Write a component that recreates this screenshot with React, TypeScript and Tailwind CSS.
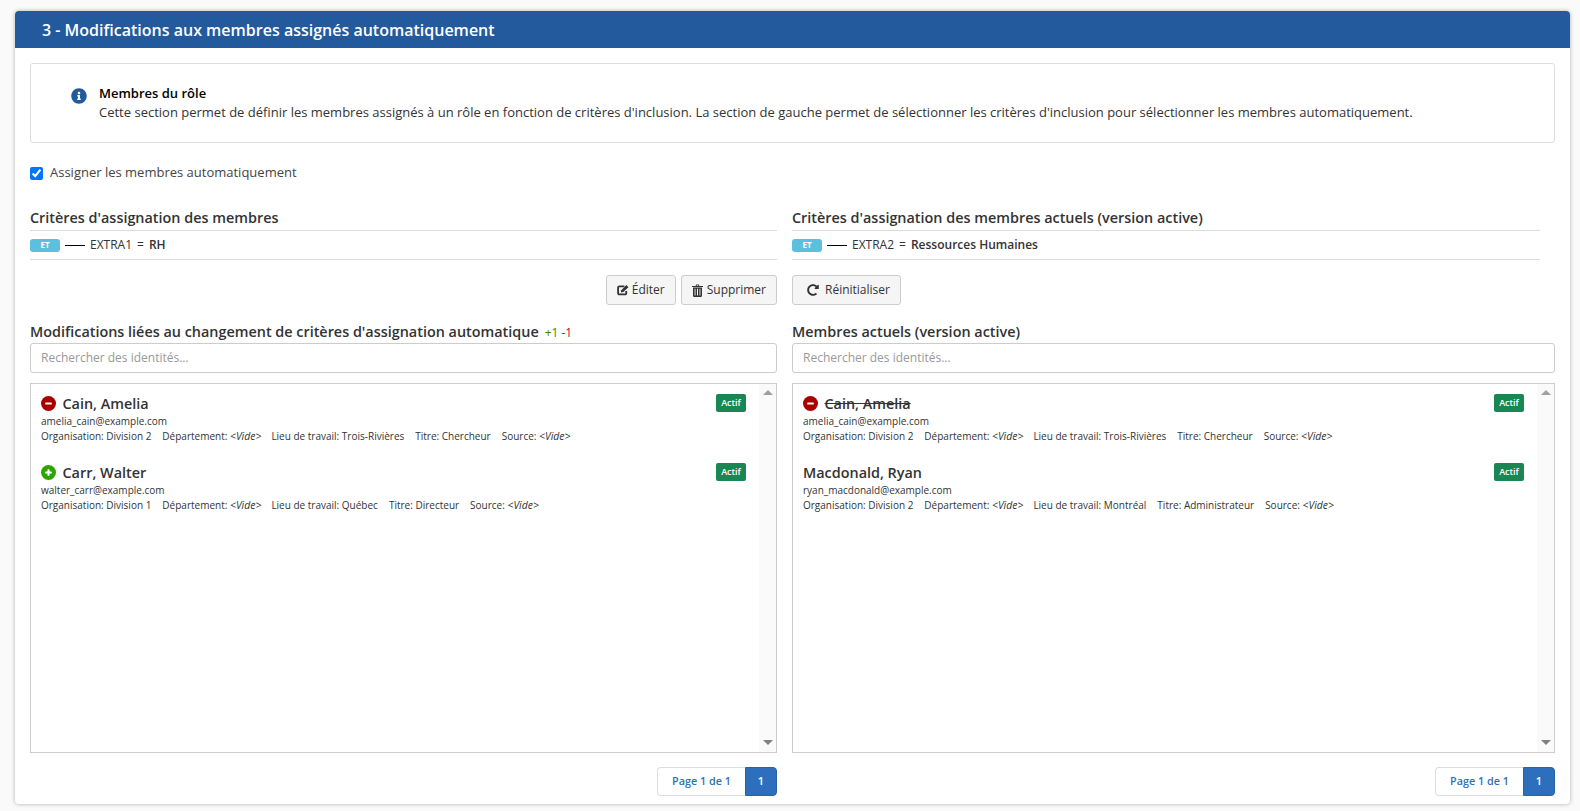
import React from "react";
import { FaInfoCircle, FaRedoAlt } from "react-icons/fa";

interface Membre {
  nom: string;
  email: string;
  organisation: string;
  lieu: string;
  titre: string;
  statut?: "ajout" | "retrait";
  barre?: boolean;
}

const gauche: Membre[] = [
  { nom: "Cain, Amelia", email: "amelia_cain@example.com", organisation: "Division 2", lieu: "Trois-Rivières", titre: "Chercheur", statut: "retrait" },
  { nom: "Carr, Walter", email: "walter_carr@example.com", organisation: "Division 1", lieu: "Québec", titre: "Directeur", statut: "ajout" },
];

const droite: Membre[] = [
  { nom: "Cain, Amelia", email: "amelia_cain@example.com", organisation: "Division 2", lieu: "Trois-Rivières", titre: "Chercheur", statut: "retrait", barre: true },
  { nom: "Macdonald, Ryan", email: "ryan_macdonald@example.com", organisation: "Division 2", lieu: "Montréal", titre: "Administrateur" },
];

const Vide = () => <i className="text-[10.4px]">&lt;Vide&gt;</i>;

const IconeEditer = () => (
  <svg width="12" height="12" viewBox="0 0 13 12" className="mr-[3px]" fill="none">
    <path d="M8 2H2.6A1.3 1.3 0 0 0 1.2 3.3v6.1a1.3 1.3 0 0 0 1.4 1.4h6.1a1.3 1.3 0 0 0 1.3-1.4V7" stroke="#333" strokeWidth="2" />
    <path d="M4.2 8.6 4.6 6.2 10.2 0.7 12.4 2.9 6.8 8.3Z" fill="#333" />
  </svg>
);

const IconeCorbeille = () => (
  <svg width="11" height="13" viewBox="0 0 11 13" className="mr-[4px]" fill="#333">
    <path d="M3.6 1.9 4.2.4h2.6l.6 1.5H11v1H0v-1Zm1-.1h1.8L6.1 1.1H4.9Z" />
    <path d="M1 3.4h9v8.3c0 .7-.4 1.2-1 1.2H2c-.6 0-1-.5-1-1.2Zm1.6 1.3v6.9h.9V4.7Zm2.4 0v6.9h1V4.7Zm2.5 0v6.9h.9V4.7Z" />
  </svg>
);

const Pastille = ({ statut }: { statut: "ajout" | "retrait" }) => (
  <svg width="15" height="15" viewBox="0 0 15 15" className="mr-[6.5px] shrink-0">
    <circle cx="7.5" cy="7.5" r="7.5" fill={statut === "ajout" ? "#2ca500" : "#a80000"} />
    <rect x="4.2" y="6.5" width="6.6" height="2" rx="0.6" fill="#fff" />
    {statut === "ajout" && <rect x="6.5" y="4.2" width="2" height="6.6" rx="0.6" fill="#fff" />}
  </svg>
);

const Critere = ({ champ, valeur }: { champ: string; valeur: string }) => (
  <div className="h-[30px] border-y border-[#dcdcdc] flex items-center text-xs text-[#333]">
    <span className="w-[30px] h-[13px] rounded-[3px] bg-[#5bc0de] text-white text-[8px] font-bold flex items-center justify-center">
      ET
    </span>
    <span className="w-5 h-px bg-black ml-[5px] mr-[5px]" />
    <span>{champ}</span>
    <span className="mx-[5px]">=</span>
    <span className="font-semibold">{valeur}</span>
  </div>
);

const Bouton = ({ children }: { children: React.ReactNode }) => (
  <button className="h-[30px] px-[10px] flex items-center border border-[#ccc] rounded-[3px] bg-[#f5f5f5] text-xs text-[#333]">
    {children}
  </button>
);

const Recherche = () => (
  <input
    placeholder="Rechercher des identités..."
    className="w-full h-[30px] px-[10px] pb-px block border border-[#ccc] rounded-[3px] bg-white text-xs placeholder:text-[#999] outline-none"
  />
);

const LigneMembre = ({ m }: { m: Membre }) => (
  <div className="h-[69px] flex justify-between">
    <div>
      <div className="h-[21px] flex items-center text-[14.4px] font-semibold text-[#333]">
        {m.statut && <Pastille statut={m.statut} />}
        <span className={m.barre ? "line-through" : ""}>{m.nom}</span>
      </div>
      <div className="text-[10px] leading-[15px] text-[#333]">{m.email}</div>
      <div className="text-[10px] leading-[15px] text-[#333] flex gap-[11px]">
        <span>Organisation: {m.organisation}</span>
        <span className="-mr-px">
          Département: <Vide />
        </span>
        <span>Lieu de travail: {m.lieu}</span>
        <span>Titre: {m.titre}</span>
        <span>
          Source: <Vide />
        </span>
      </div>
    </div>
    <div>
      <span className="mt-px w-[30px] h-[18px] rounded-[2px] bg-[#198754] text-white text-[9px] font-semibold flex items-center justify-center">
        Actif
      </span>
    </div>
  </div>
);

const Liste = ({ membres }: { membres: Membre[] }) => (
  <div className="mt-[10px] h-[370px] border border-[#ccc] bg-white flex">
    <div className="flex-1 pl-[10px] pr-[13px] pt-[9px]">
      {membres.map((m) => (
        <LigneMembre key={m.nom} m={m} />
      ))}
    </div>
    <div className="w-[17px] bg-[#fafafa] flex flex-col justify-between items-center pt-[6px] pb-[7px]">
      <span className="w-0 h-0 border-x-[5px] border-x-transparent border-b-[5px] border-b-[#a0a0a0]" />
      <span className="w-0 h-0 border-x-[5px] border-x-transparent border-t-[5px] border-t-[#808080]" />
    </div>
  </div>
);

const Pagination = () => (
  <div className="mt-[14px] flex justify-end">
    <div className="h-[29px] w-[88px] flex items-center justify-center border border-r-0 border-[#ddd] rounded-l-[4px] bg-white text-[10.8px] font-semibold text-[#2e6fbd]">
      Page 1 de 1
    </div>
    <div className="h-[29px] w-[32px] flex items-center justify-center rounded-r-[4px] border border-[#2a62a8] bg-[#2e6fbd] text-[11px] font-semibold text-white">
      1
    </div>
  </div>
);

const Titre = ({ children }: { children: React.ReactNode }) => (
  <h3 className="text-[14.4px] font-semibold leading-5 text-[#333]">{children}</h3>
);

export default function App() {
  return (
    <div className="min-h-[811px] bg-[#fafafa] pt-[11px] pl-[15px] pr-[10px] font-['Open_Sans',sans-serif]">
      <div className="h-[793px] bg-white rounded-[4px] shadow-[0_0_4px_rgba(0,0,0,0.3)] overflow-hidden">
        <div className="h-[37px] bg-[#235a9e] pl-[27px] flex items-center text-white text-base font-semibold">
          3 - Modifications aux membres assignés automatiquement
        </div>
        <div className="px-[15px] pt-[15px]">
          <div className="h-[80px] border border-[#ddd] rounded-[3px] pl-[40px] flex items-center">
            <FaInfoCircle className="text-[#235a9e] mr-[12px] mb-[14px] shrink-0" size={16} />
            <div className="text-[13px] leading-[19px] text-[#333]">
              <div className="font-semibold text-black">Membres du rôle</div>
              <div>
                Cette section permet de définir les membres assignés à un rôle en fonction de critères d'inclusion. La section de gauche permet de sélectionner les critères d'inclusion pour sélectionner les membres automatiquement.
              </div>
            </div>
          </div>

          <label className="mt-[20px] h-[20px] flex items-center text-[13px] text-[#444]">
            <input type="checkbox" defaultChecked className="w-[13px] h-[13px] mr-[7px] accent-[#0075ff]" />
            Assigner les membres automatiquement
          </label>

          <div className="mt-[25px] grid grid-cols-[747px_763px] gap-x-[15px]">
            <div>
              <Titre>Critères d'assignation des membres</Titre>
              <div className="mt-[2px]">
                <Critere champ="EXTRA1" valeur="RH" />
              </div>
              <div className="mt-[15px] flex justify-end gap-[5px]">
                <Bouton>
                  <IconeEditer /> Éditer
                </Bouton>
                <Bouton>
                  <IconeCorbeille /> Supprimer
                </Bouton>
              </div>
              <div className="mt-[17px]">
                <Titre>
                  Modifications liées au changement de critères d'assignation automatique
                  <span className="ml-[6px] text-xs font-normal text-[#3c8a00]">+1</span>
                  <span className="ml-[3px] text-xs font-normal text-[#c00030]">-1</span>
                </Titre>
              </div>
              <div className="mt-px">
                <Recherche />
              </div>
              <Liste membres={gauche} />
              <Pagination />
            </div>
            <div>
              <Titre>Critères d'assignation des membres actuels (version active)</Titre>
              <div className="mt-[2px] w-[748px]">
                <Critere champ="EXTRA2" valeur="Ressources Humaines" />
              </div>
              <div className="mt-[15px] flex">
                <Bouton>
                  <span className="pl-[4px] flex items-center">
                    <FaRedoAlt className="mr-[6px]" size={12} /> Réinitialiser
                  </span>
                </Bouton>
              </div>
              <div className="mt-[17px]">
                <Titre>Membres actuels (version active)</Titre>
              </div>
              <div className="mt-px">
                <Recherche />
              </div>
              <Liste membres={droite} />
              <Pagination />
            </div>
          </div>
        </div>
      </div>
    </div>
  );
}
